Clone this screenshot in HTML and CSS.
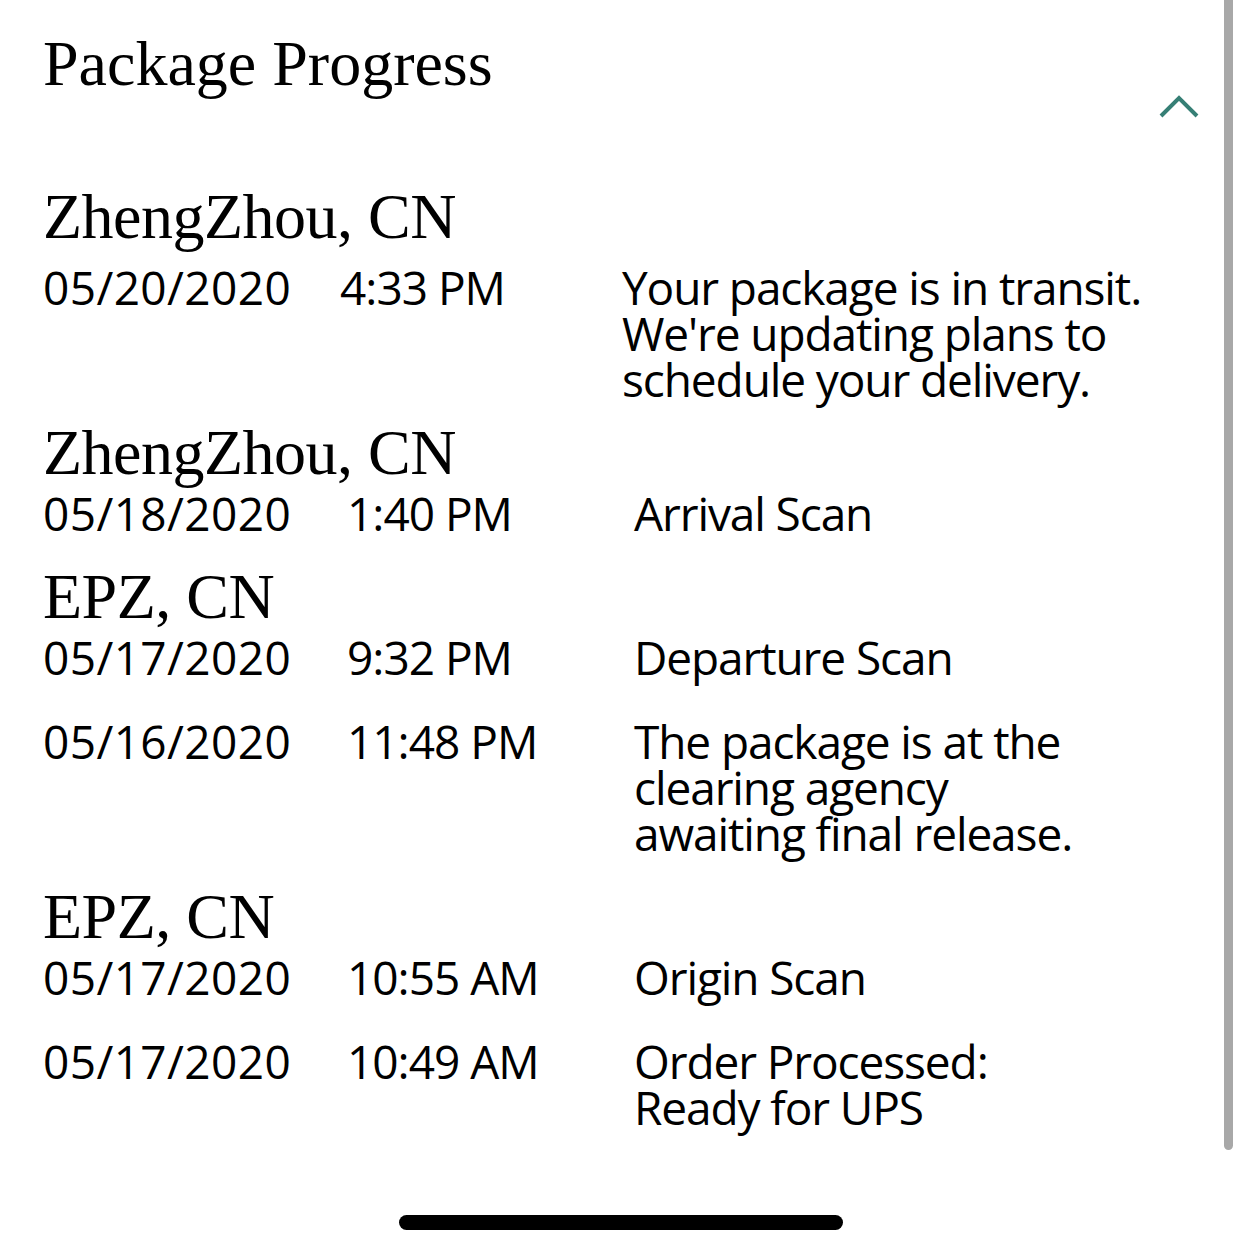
FILE: index.html
```html
<!DOCTYPE html>
<html lang="en">
<head>
<meta charset="utf-8">
<title>Package Progress</title>
<link rel="stylesheet" href="styles.css">
</head>
<body>
<main class="page">
  <header class="header">
    <h1 class="title">Package Progress</h1>
    <button class="collapse" aria-label="Collapse">
      <svg class="chevron" viewBox="0 0 40 26" width="40" height="26"><path d="M2 22 L20 4 L38 22"/></svg>
    </button>
  </header>

  <section class="groups">
    <div class="group group--latest">
      <h2 class="loc">ZhengZhou, CN</h2>
      <div class="event event--latest">
        <span class="date">05/20/2020</span>
        <span class="time">4:33 PM</span>
        <span class="desc">Your package is in transit.<br>We're updating plans to<br>schedule your delivery.</span>
      </div>
    </div>

    <div class="group">
      <h2 class="loc">ZhengZhou, CN</h2>
      <div class="event">
        <span class="date">05/18/2020</span>
        <span class="time">1:40 PM</span>
        <span class="desc">Arrival Scan</span>
      </div>
    </div>

    <div class="group">
      <h2 class="loc">EPZ, CN</h2>
      <div class="event">
        <span class="date">05/17/2020</span>
        <span class="time">9:32 PM</span>
        <span class="desc">Departure Scan</span>
      </div>
      <div class="event">
        <span class="date">05/16/2020</span>
        <span class="time">11:48 PM</span>
        <span class="desc">The package is at the<br>clearing agency<br>awaiting final release.</span>
      </div>
    </div>

    <div class="group">
      <h2 class="loc">EPZ, CN</h2>
      <div class="event">
        <span class="date">05/17/2020</span>
        <span class="time">10:55 AM</span>
        <span class="desc">Origin Scan</span>
      </div>
      <div class="event">
        <span class="date">05/17/2020</span>
        <span class="time">10:49 AM</span>
        <span class="desc">Order Processed:<br>Ready for UPS</span>
      </div>
    </div>
  </section>
</main>
<div class="scrollbar"></div>
<div class="home-indicator"></div>
</body>
</html>
```

FILE: styles.css
```css
* {
  box-sizing: border-box;
}

html, body {
  margin: 0;
  padding: 0;
  background: #ffffff;
}

body {
  width: 1242px;
  height: 1254px;
  overflow: hidden;
  color: #000000;
  font-family: "Open Sans", "Noto Sans", sans-serif;
}

.page {
  padding: 33px 43px 0 43px;
  display: flex;
  flex-direction: column;
}

.header {
  display: flex;
  justify-content: space-between;
  align-items: flex-start;
}

.title {
  margin: 0;
  font-family: "Liberation Serif", serif;
  font-weight: 400;
  font-size: 64px;
  line-height: 62px;
}

.collapse {
  margin: 61px 0 0 0;
  padding: 0;
  border: 0;
  background: none;
  display: block;
  width: 40px;
  height: 26px;
}

.chevron {
  display: block;
}

.chevron path {
  fill: none;
  stroke: #367f75;
  stroke-width: 4;
  stroke-linecap: butt;
  stroke-linejoin: miter;
}

.groups {
  margin-top: 69px;
  display: flex;
  flex-direction: column;
  gap: 29px;
}

.group {
  display: flex;
  flex-direction: column;
  gap: 38px;
}

.group--latest {
  margin-bottom: -10px;
}

.loc {
  margin: 0 0 -33px 0;
  font-family: "Liberation Serif", serif;
  font-weight: 400;
  font-size: 64px;
  line-height: 64px;
  letter-spacing: -0.5px;
}

.group--latest .loc {
  margin: -4px 0 -23px 0;
}

.event {
  display: grid;
  grid-template-columns: 304px 287px 1fr;
  font-size: 46px;
  line-height: 46px;
}

.event--latest {
  grid-template-columns: 297px 282px 1fr;
}

.date {
  letter-spacing: 0.4px;
}

.time {
  letter-spacing: -1px;
}

.desc {
  white-space: nowrap;
  letter-spacing: -1.1px;
}

.scrollbar {
  position: fixed;
  top: 0;
  right: 9px;
  width: 9px;
  height: 1150px;
  background: #a8a8a8;
  border-radius: 0 0 5px 5px;
}

.home-indicator {
  position: fixed;
  left: 50%;
  bottom: 24px;
  width: 444px;
  height: 15px;
  margin-left: -222px;
  background: #000000;
  border-radius: 8px;
}
```
